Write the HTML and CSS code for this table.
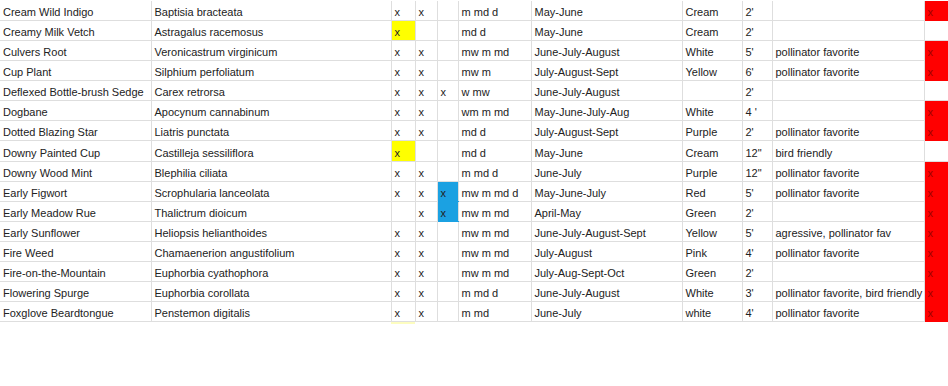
FILE: index.html
```html
<!DOCTYPE html>
<html>
<head>
<meta charset="utf-8">
<link rel="stylesheet" href="styles.css">
</head>
<body>
<table class="sheet">
<colgroup>
<col class="c1"><col class="c2"><col class="c3"><col class="c4"><col class="c5"><col class="c6"><col class="c7"><col class="c8"><col class="c9"><col class="c10"><col class="c11">
</colgroup>
<tbody>
<tr><td>Cream Wild Indigo</td><td>Baptisia bracteata</td><td>x</td><td>x</td><td></td><td>m md d</td><td>May-June</td><td>Cream</td><td>2'</td><td></td><td class="red">x</td></tr>
<tr><td>Creamy Milk Vetch</td><td>Astragalus racemosus</td><td class="yellow">x</td><td></td><td></td><td>md d</td><td>May-June</td><td>Cream</td><td>2'</td><td></td><td></td></tr>
<tr><td>Culvers Root</td><td>Veronicastrum virginicum</td><td>x</td><td>x</td><td></td><td>mw m md</td><td>June-July-August</td><td>White</td><td>5'</td><td>pollinator favorite</td><td class="red">x</td></tr>
<tr><td>Cup Plant</td><td>Silphium perfoliatum</td><td>x</td><td>x</td><td></td><td>mw m</td><td>July-August-Sept</td><td>Yellow</td><td>6'</td><td>pollinator favorite</td><td class="red">x</td></tr>
<tr><td>Deflexed Bottle-brush Sedge</td><td>Carex retrorsa</td><td>x</td><td>x</td><td>x</td><td>w mw</td><td>June-July-August</td><td></td><td>2'</td><td></td><td></td></tr>
<tr><td>Dogbane</td><td>Apocynum cannabinum</td><td>x</td><td>x</td><td></td><td>wm m md</td><td>May-June-July-Aug</td><td>White</td><td>4 '</td><td></td><td class="red">x</td></tr>
<tr><td>Dotted Blazing Star</td><td>Liatris punctata</td><td>x</td><td>x</td><td></td><td>md d</td><td>July-August-Sept</td><td>Purple</td><td>2'</td><td>pollinator favorite</td><td class="red">x</td></tr>
<tr class="tall"><td>Downy Painted Cup</td><td>Castilleja sessiliflora</td><td class="yellow">x</td><td></td><td></td><td>md d</td><td>May-June</td><td>Cream</td><td>12"</td><td>bird friendly</td><td></td></tr>
<tr><td>Downy Wood Mint</td><td>Blephilia ciliata</td><td>x</td><td>x</td><td></td><td>m md d</td><td>June-July</td><td>Purple</td><td>12"</td><td>pollinator favorite</td><td class="red">x</td></tr>
<tr><td>Early Figwort</td><td>Scrophularia lanceolata</td><td>x</td><td>x</td><td class="blue">x</td><td>mw m md d</td><td>May-June-July</td><td>Red</td><td>5'</td><td>pollinator favorite</td><td class="red">x</td></tr>
<tr><td>Early Meadow Rue</td><td>Thalictrum dioicum</td><td></td><td>x</td><td class="blue">x</td><td>mw m md</td><td>April-May</td><td>Green</td><td>2'</td><td></td><td class="red">x</td></tr>
<tr><td>Early Sunflower</td><td>Heliopsis helianthoides</td><td>x</td><td>x</td><td></td><td>mw m md</td><td>June-July-August-Sept</td><td>Yellow</td><td>5'</td><td>agressive, pollinator fav</td><td class="red">x</td></tr>
<tr><td>Fire Weed</td><td>Chamaenerion angustifolium</td><td>x</td><td>x</td><td></td><td>mw m md</td><td>July-August</td><td>Pink</td><td>4'</td><td>pollinator favorite</td><td class="red">x</td></tr>
<tr><td>Fire-on-the-Mountain</td><td>Euphorbia cyathophora</td><td>x</td><td>x</td><td></td><td>mw m md</td><td>July-Aug-Sept-Oct</td><td>Green</td><td>2'</td><td></td><td class="red">x</td></tr>
<tr><td>Flowering Spurge</td><td>Euphorbia corollata</td><td>x</td><td>x</td><td></td><td>m md d</td><td>June-July-August</td><td>White</td><td>3'</td><td>pollinator favorite, bird friendly</td><td class="red">x</td></tr>
<tr><td>Foxglove Beardtongue</td><td>Penstemon digitalis</td><td>x</td><td>x</td><td></td><td>m md</td><td>June-July</td><td>white</td><td>4'</td><td>pollinator favorite</td><td class="red">x</td></tr>
<tr class="stub"><td></td><td></td><td class="yellow"></td><td></td><td></td><td></td><td></td><td></td><td></td><td></td><td></td></tr>
</tbody>
</table>
</body>
</html>
```

FILE: styles.css
```css
html, body {
  margin: 0;
  padding: 0;
  background: #ffffff;
}

.sheet {
  border-collapse: collapse;
  table-layout: fixed;
  width: 948px;
  margin-top: 1px;
  font-family: "Liberation Sans", Arial, sans-serif;
  font-size: 11px;
  color: #222222;
}

.c1 { width: 151px; }
.c2 { width: 240px; }
.c3 { width: 24px; }
.c4 { width: 22px; }
.c5 { width: 21px; }
.c6 { width: 73px; }
.c7 { width: 151px; }
.c8 { width: 60px; }
.c9 { width: 30px; }
.c10 { width: 152px; }
.c11 { width: 24px; }

.sheet td {
  height: 15px;
  padding: 4px 0 0 3px;
  border-right: 1px solid #dedede;
  border-bottom: 1px solid #dedede;
  white-space: nowrap;
  overflow: hidden;
  vertical-align: middle;
  line-height: 15px;
}

.sheet .tall td {
  height: 16px;
}

.sheet td:last-child {
  border-right: none;
}

.sheet .yellow {
  background: #ffff00;
}

.sheet .blue {
  background: #1ba1e2;
  border-bottom-color: #1ba1e2;
}

.sheet .red {
  background: #ff0000;
  color: #a00000;
  border-bottom-color: #ff0000;
}

.sheet .stub td {
  height: 2px;
  line-height: 2px;
  padding: 0;
  border: none;
}

.sheet .stub td.yellow {
  background: #fdfdc0;
}
```
